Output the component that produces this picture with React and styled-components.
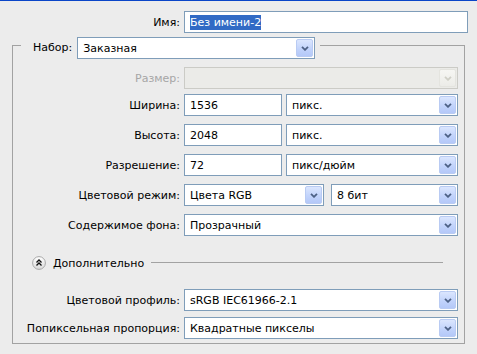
import React from 'react';
import styled, { createGlobalStyle } from 'styled-components';

const Global = createGlobalStyle`
  html, body { margin: 0; padding: 0; background: #ececec; }
  body {
    font-family: "DejaVu Sans", "Liberation Sans", sans-serif;
    font-size: 11px;
    color: #000;
  }
`;

const Dialog = styled.div`
  width: 477px;
  height: 354px;
  box-sizing: border-box;
  border-top: 1px solid #0a45c8;
  background: #ececec;
  padding-top: 10px;
  overflow: hidden;
`;

const Row = styled.div`
  display: flex;
  align-items: center;
  height: 22px;
  margin-top: ${p => p.$mt || 0}px;
`;

const Label = styled.span`
  width: ${p => p.$w || 167}px;
  flex: none;
  text-align: right;
  padding-right: 4px;
  white-space: nowrap;
  color: ${p => (p.$disabled ? '#a6a6a6' : '#000')};
`;

const TextInput = styled.div`
  width: ${p => p.$w}px;
  height: 22px;
  box-sizing: border-box;
  flex: none;
  border: 1px solid #7f9db9;
  background: #fff;
  display: flex;
  align-items: center;
  padding-left: 5px;
  margin-right: ${p => p.$mr || 0}px;
  white-space: nowrap;
`;

const Selected = styled.span`
  background: #316ac5;
  color: #fff;
  line-height: 15px;
`;

const SelectBox = styled.div`
  width: ${p => p.$w}px;
  height: 22px;
  box-sizing: border-box;
  flex: none;
  border: 1px solid ${p => (p.$disabled ? '#cbcbc6' : '#7f9db9')};
  background: ${p => (p.$disabled ? '#ebebe8' : '#fff')};
  display: flex;
  align-items: center;
  padding: 1px;
  margin-right: ${p => p.$mr || 0}px;
`;

const SelectText = styled.span`
  flex: 1;
  padding-left: 4px;
  white-space: nowrap;
  overflow: hidden;
`;

const DropButton = styled.span`
  width: 17px;
  height: 18px;
  box-sizing: border-box;
  flex: none;
  border-radius: 2px;
  border: 1px solid ${p => (p.$disabled ? '#e4e4df' : '#b9cbf3')};
  background: ${p =>
    p.$disabled
      ? 'linear-gradient(#f6f6f3, #ecece8)'
      : 'linear-gradient(#dbe6fe, #c0d2fb 60%, #b4c8f8)'};
  display: flex;
  align-items: center;
  justify-content: center;
`;

const Chevron = ({ disabled }) => (
  <svg width="8" height="5" viewBox="0 0 8 5">
    <polyline
      points="1,0.8 4,3.8 7,0.8"
      fill="none"
      stroke={disabled ? '#cfcfc6' : '#4d6185'}
      strokeWidth="1.8"
    />
  </svg>
);

const Select = ({ w, mr, value, disabled }) => (
  <SelectBox $w={w} $mr={mr} $disabled={disabled}>
    <SelectText>{value}</SelectText>
    <DropButton $disabled={disabled}>
      <Chevron disabled={disabled} />
    </DropButton>
  </SelectBox>
);

const Group = styled.fieldset`
  margin: 4px 0 0 12px;
  width: 453px;
  box-sizing: border-box;
  border: 1px solid #a2a2a2;
  padding: 13px 6px 4px 0;
  min-width: 0;
`;

const Legend = styled.legend`
  margin-left: 8px;
  padding: 0 5px 0 12px;
  display: flex;
  align-items: flex-start;
  height: 17px;
  overflow: visible;
`;

const LegendLabel = styled.span`
  margin-right: 5px;
  line-height: 22px;
`;

const Body = styled.div`
  display: flex;
  flex-direction: column;
`;

const AdvancedRow = styled.div`
  display: flex;
  align-items: center;
  height: 14px;
  margin: 20px 15px 0 19px;
`;

const ToggleCircle = styled.span`
  width: 14px;
  height: 14px;
  flex: none;
  display: flex;
  margin-right: 7px;
`;

const AdvancedText = styled.span`
  margin-right: 7px;
`;

const Rule = styled.span`
  flex: 1;
  height: 0;
  border-top: 1px solid #a2a2a2;
  margin-top: -2px;
`;

export default function App() {
  return (
    <>
      <Global />
      <Dialog>
        <Row>
          <Label $w={180}>Имя:</Label>
          <TextInput $w={284}>
            <Selected>Без имени-2</Selected>
          </TextInput>
        </Row>
        <Group>
          <Legend>
            <LegendLabel>Набор:</LegendLabel>
            <Select w={238} value="Заказная" />
          </Legend>
          <Body>
            <Row>
              <Label $disabled>Размер:</Label>
              <Select w={274} value="" disabled />
            </Row>
            <Row $mt={5}>
              <Label>Ширина:</Label>
              <TextInput $w={98} $mr={4}>1536</TextInput>
              <Select w={172} value="пикс." />
            </Row>
            <Row $mt={8}>
              <Label>Высота:</Label>
              <TextInput $w={98} $mr={4}>2048</TextInput>
              <Select w={172} value="пикс." />
            </Row>
            <Row $mt={8}>
              <Label>Разрешение:</Label>
              <TextInput $w={98} $mr={4}>72</TextInput>
              <Select w={172} value="пикс/дюйм" />
            </Row>
            <Row $mt={8}>
              <Label>Цветовой режим:</Label>
              <Select w={140} mr={7} value="Цвета RGB" />
              <Select w={127} value="8 бит" />
            </Row>
            <Row $mt={8}>
              <Label>Содержимое фона:</Label>
              <Select w={274} value="Прозрачный" />
            </Row>
            <AdvancedRow>
              <ToggleCircle>
                <svg width="14" height="14" viewBox="0 0 14 14">
                  <defs>
                    <linearGradient id="tg" x1="0" y1="0" x2="0" y2="1">
                      <stop offset="0" stopColor="#ffffff" />
                      <stop offset="1" stopColor="#d9d9d9" />
                    </linearGradient>
                  </defs>
                  <circle cx="7" cy="7" r="6.4" fill="url(#tg)" stroke="#a8a8a8" strokeWidth="1" />
                  <polyline points="4.5,6.5 7,4 9.5,6.5" fill="none" stroke="#111" strokeWidth="1.3" />
                  <polyline points="4.5,9.5 7,7 9.5,9.5" fill="none" stroke="#111" strokeWidth="1.3" />
                </svg>
              </ToggleCircle>
              <AdvancedText>Дополнительно</AdvancedText>
              <Rule />
            </AdvancedRow>
            <Row $mt={19}>
              <Label>Цветовой профиль:</Label>
              <Select w={274} value="sRGB IEC61966-2.1" />
            </Row>
            <Row $mt={6}>
              <Label>Попиксельная пропорция:</Label>
              <Select w={274} value="Квадратные пикселы" />
            </Row>
          </Body>
        </Group>
      </Dialog>
    </>
  );
}
